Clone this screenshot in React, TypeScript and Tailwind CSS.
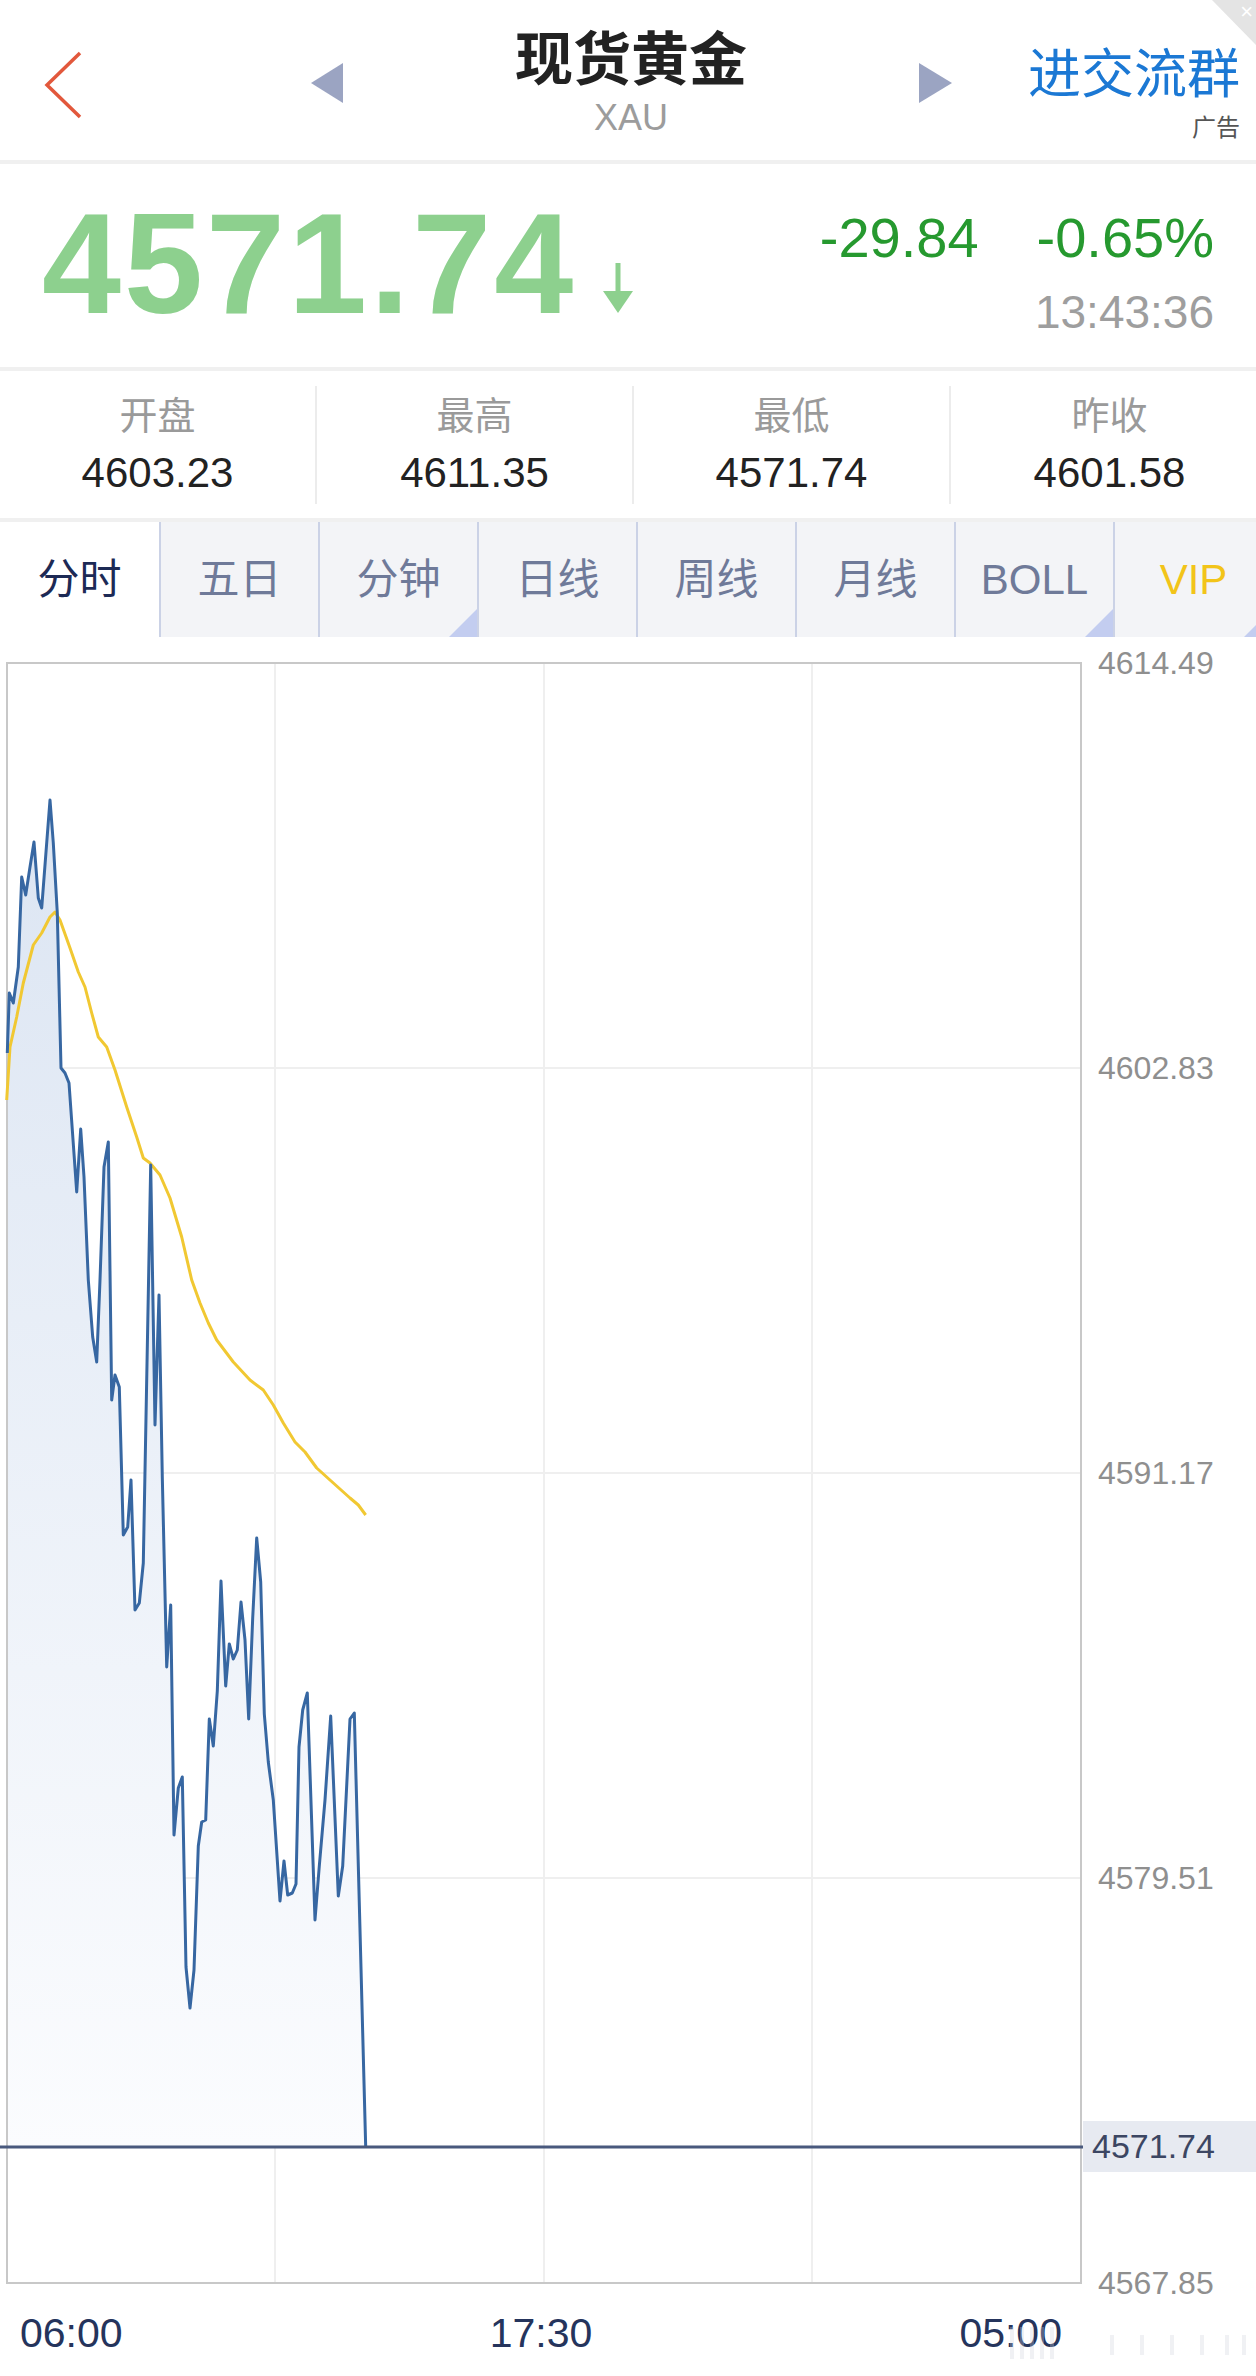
import React from "react";

// price track, page coordinates (chart box spans x 7..1081, y 663..2283)
const PRICE: [number, number][] = [
  [7.3, 1053], [9.3, 993], [13.3, 1003], [18.3, 967], [21.7, 877], [25.7, 895], [30, 867], [34, 842],
  [38.3, 898], [41.7, 908], [50, 800], [53.3, 843], [57.3, 913], [61, 1068], [65, 1073], [69, 1083],
  [76.7, 1192], [80.7, 1129], [84, 1177], [88.3, 1280], [92.7, 1337], [96.7, 1362], [100, 1280],
  [104, 1167], [108.3, 1142], [111.7, 1400], [115, 1375], [119.3, 1387], [123.3, 1535], [127.7, 1527],
  [131, 1480], [135, 1610], [139.3, 1603], [143.3, 1563], [150.7, 1165], [155, 1425], [159, 1295],
  [162.3, 1477], [166.7, 1667], [170.7, 1605], [174, 1835], [178.3, 1788], [182.3, 1777], [186, 1967],
  [190, 2008], [194, 1970], [198.3, 1846], [201.7, 1822], [205.7, 1820], [209.3, 1719], [213.3, 1746],
  [217.3, 1691], [221, 1581], [225.7, 1686], [229.3, 1644], [233.3, 1659], [237.3, 1650], [241, 1602],
  [245, 1640], [248.7, 1719], [252.7, 1618], [256.7, 1538], [260.7, 1582], [264.3, 1714], [268.3, 1762],
  [273.3, 1800], [280, 1901], [284, 1861], [287.7, 1895], [292.3, 1893], [296, 1884], [299, 1747],
  [302.7, 1710], [307.3, 1693], [315, 1920], [319.3, 1866], [325, 1800], [330.7, 1716], [338.3, 1896],
  [342.7, 1866], [350, 1719], [354.3, 1713], [365.7, 2147],
];

const AVERAGE: [number, number][] = [
  [6.7, 1100], [10, 1047], [16.7, 1017], [23.3, 983], [33.3, 945], [41.7, 933], [50, 917], [55, 912],
  [60, 920], [70, 948], [78.3, 972], [85, 987], [91.7, 1013], [98.3, 1037], [106.7, 1047], [115, 1070],
  [126.7, 1107], [136.7, 1137], [143.3, 1158], [150, 1163], [160, 1175], [170, 1198], [181.7, 1237],
  [191.7, 1280], [200, 1303], [208.3, 1323], [216.7, 1340], [233.3, 1362], [250, 1380], [263.3, 1390],
  [273.3, 1405], [283.3, 1423], [295, 1442], [305, 1452], [316.7, 1468], [333.3, 1483], [350, 1498],
  [358.3, 1505], [365.7, 1515],
];

const toPath = (pts: [number, number][]) =>
  pts.map((p, i) => `${i ? "L" : "M"}${p[0]} ${p[1]}`).join(" ");

const stats = [
  { label: "开盘", value: "4603.23" },
  { label: "最高", value: "4611.35" },
  { label: "最低", value: "4571.74" },
  { label: "昨收", value: "4601.58" },
];

const tabs = [
  { label: "分时", active: true },
  { label: "五日" },
  { label: "分钟", corner: true },
  { label: "日线" },
  { label: "周线" },
  { label: "月线" },
  { label: "BOLL", corner: true },
  { label: "VIP", vip: true, corner: true },
];

const axis = ["4614.49", "4602.83", "4591.17", "4579.51", "4567.85"];

function Chart() {
  const fill = `${toPath(PRICE)} L8 2147 Z`;
  return (
    <svg width="1083" height="1676" viewBox="0 637 1083 1676" className="block shrink-0">
      <defs>
        <linearGradient id="area" gradientUnits="userSpaceOnUse" x1="0" y1="842" x2="0" y2="2147">
          <stop offset="0" stopColor="#dde6f3" />
          <stop offset="1" stopColor="#fbfcfe" />
        </linearGradient>
      </defs>
      {/* grid */}
      {[1068, 1473, 1878].map((y) => (
        <line key={y} x1="8" x2="1080" y1={y} y2={y} stroke="#efefef" strokeWidth="2" />
      ))}
      {[275, 544, 812].map((x) => (
        <line key={x} x1={x} x2={x} y1="664" y2="2282" stroke="#efefef" strokeWidth="2" />
      ))}
      <path d={fill} fill="url(#area)" />
      <rect x="7" y="663" width="1074" height="1620" fill="none" stroke="#c8c8c8" strokeWidth="2" />
      <path d={toPath(AVERAGE)} fill="none" stroke="#f1c832" strokeWidth="3" strokeLinejoin="round" />
      <path d={toPath(PRICE)} fill="none" stroke="#3767a2" strokeWidth="3" strokeLinejoin="round" />
      {/* last price */}
      <line x1="0" x2="1083" y1="2147" y2="2147" stroke="#49597d" strokeWidth="3" />
    </svg>
  );
}

export default function App() {
  return (
    <div className="w-[1256px] h-[2376px] bg-white overflow-hidden font-['Liberation_Sans','Noto_Sans_CJK_SC',sans-serif]">
      {/* Header */}
      <header className="relative h-[160px] flex items-start pl-[44px]">
        <svg width="40" height="68" viewBox="0 0 40 68" className="mt-[51px] shrink-0">
          <polyline points="36,2 3,34 36,66" fill="none" stroke="#e2583c" strokeWidth="3.5" />
        </svg>
        <div className="ml-[227px] w-[641px] flex items-start justify-between">
          <svg width="32" height="40" viewBox="0 0 32 40" className="mt-[63px]">
            <polygon points="32,0 0,20 32,40" fill="#9ba4c2" />
          </svg>
          <div className="flex flex-col items-center pt-[26px]">
            <div className="text-[58px] leading-none font-bold text-[#222] font-['Noto_Sans_CJK_SC',sans-serif]">
              现货黄金
            </div>
            <div className="mt-[16px] text-[36px] leading-none text-[#9c9c9c]">XAU</div>
          </div>
          <svg width="33" height="40" viewBox="0 0 33 40" className="mt-[63px]">
            <polygon points="0,0 33,20 0,40" fill="#9ba4c2" />
          </svg>
        </div>
        <div className="ml-auto pr-[16px] flex flex-col items-end pt-[44px]">
          <div className="text-[53px] leading-none text-[#1b78d4] font-['Noto_Sans_CJK_SC',sans-serif]">进交流群</div>
          <div className="mt-[17px] text-[24px] leading-none text-[#555] font-['Noto_Sans_CJK_SC',sans-serif]">广告</div>
        </div>
        {/* ad close corner */}
        <div className="absolute top-0 right-0 w-[44px] h-[45px] bg-[#e4e4e4] [clip-path:polygon(0_0,100%_0,100%_100%)]">
          <span className="absolute right-[3px] top-[1px] text-[22px] leading-none text-white">×</span>
        </div>
      </header>
      <div className="h-[4px] bg-[#f0f0f0]" />

      {/* Quote */}
      <section className="h-[203px] flex justify-between pl-[42px] pr-[42px]">
        <div className="flex items-start pt-[29px]">
          <div className="text-[142px] leading-none font-bold tracking-[3px] text-[#8dd08e]">4571.74</div>
          <svg width="32" height="50" viewBox="0 0 32 50" className="ml-[26px] mt-[70px]">
            <rect x="13.5" y="0" width="5" height="32" fill="#8dd08e" />
            <polygon points="1,28 31,28 16,50" fill="#8dd08e" />
          </svg>
        </div>
        <div className="flex flex-col items-end pt-[46px]">
          <div className="flex gap-[58px] text-[56px] leading-none text-[#26992f]">
            <span>-29.84</span>
            <span>-0.65%</span>
          </div>
          <div className="mt-[23px] text-[46px] leading-none text-[#9e9e9e]">13:43:36</div>
        </div>
      </section>
      <div className="h-[4px] bg-[#f0f0f0]" />

      {/* Stats */}
      <section className="h-[147px] flex items-center overflow-hidden">
        {stats.map((s, i) => (
          <div
            key={s.label}
            className={`w-[317px] h-[118px] shrink-0 flex flex-col items-center pt-[8px] ${
              i < 3 ? "border-r-2 border-[#ececec]" : ""
            }`}
          >
            <div className="text-[38px] leading-none text-[#9a9a9a] font-['Noto_Sans_CJK_SC',sans-serif]">{s.label}</div>
            <div className="mt-[20px] text-[42px] leading-none text-[#222]">{s.value}</div>
          </div>
        ))}
      </section>
      <div className="h-[4px] bg-[#f0f0f0]" />

      {/* Tabs */}
      <nav className="h-[115px] flex overflow-hidden">
        {tabs.map((t, i) => (
          <div
            key={t.label}
            className={`relative w-[159px] shrink-0 h-full flex items-center justify-center text-[42px] leading-none ${
              i > 0 ? "border-l-2 border-[#cbd2e6]" : ""
            } ${t.active ? "bg-white text-[#1d2a55]" : "bg-[#f3f4f7]"} ${
              t.vip ? "text-[#f2c419]" : t.active ? "" : "text-[#6f7a99]"
            }`}
          >
            {t.label}
            {t.corner && (
              <div className="absolute bottom-0 right-0 w-[28px] h-[28px] bg-[#c3cdf0] [clip-path:polygon(100%_0,100%_100%,0_100%)]" />
            )}
          </div>
        ))}
      </nav>

      {/* Chart */}
      <section className="flex h-[1676px]">
        <Chart />
        <div className="relative flex-1 pt-[10px]">
          <div className="h-[1652px] flex flex-col justify-between pl-[15px]">
            {axis.map((v) => (
              <div key={v} className="text-[32px] leading-none text-[#8f8f8f]">
                {v}
              </div>
            ))}
          </div>
          <div className="absolute left-0 right-0 top-[1484px] h-[51px] bg-[#e7eaf1] pl-[9px] text-[34px] leading-[51px] text-[#3c4662]">
            4571.74
          </div>
        </div>
      </section>

      {/* Time axis */}
      <div className="relative w-[1082px] flex justify-between px-[20px] text-[41px] leading-none text-[#25345c]">
        <span>06:00</span>
        <span>17:30</span>
        <span>05:00</span>
        <svg width="240" height="36" viewBox="0 0 240 36" className="absolute left-[1010px] top-[12px] opacity-30">
          {[0, 10, 20, 30, 40, 100, 130, 160, 190, 215, 232].map((x, i) => (
            <rect key={i} x={x} y={i < 5 ? 2 : 10} width="4" height={i < 5 ? 32 : 20} fill="#cfd3dd" />
          ))}
        </svg>
      </div>
    </div>
  );
}
